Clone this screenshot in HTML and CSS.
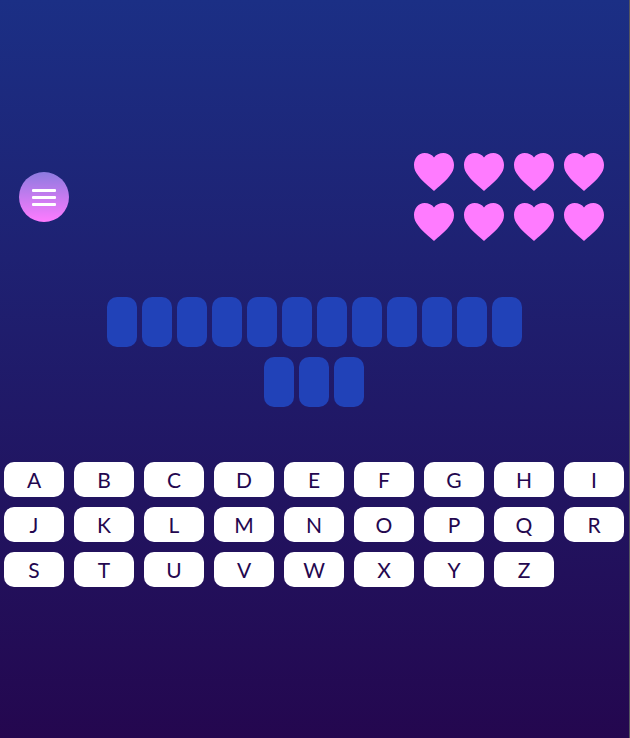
FILE: index.html
```html
<!DOCTYPE html>
<html>
	<head>
		<meta charset="utf-8" />
		<title>Hangman</title>
		<link rel="stylesheet" href="styles.css">
	</head>
	<body>
		<div class="topBar">
			<button class="menuBtn" type="button">
				<span></span>
				<span></span>
				<span></span>
			</button>
			<div class="lives">
				<svg class="heart" viewBox="0 0 40 38"><path d="M20 38C16 34 8 28.500 4.500 23C1.500 19.500 0 16 0 12C0 5.500 4.500 0 10.500 0C14.500 0 18 1.500 20 4.500C22 1.500 25.500 0 29.500 0C35.500 0 40 5.500 40 12C40 16 38.500 19.500 35.500 23C32 28.500 24 34 20 38Z"/></svg>
				<svg class="heart" viewBox="0 0 40 38"><path d="M20 38C16 34 8 28.500 4.500 23C1.500 19.500 0 16 0 12C0 5.500 4.500 0 10.500 0C14.500 0 18 1.500 20 4.500C22 1.500 25.500 0 29.500 0C35.500 0 40 5.500 40 12C40 16 38.500 19.500 35.500 23C32 28.500 24 34 20 38Z"/></svg>
				<svg class="heart" viewBox="0 0 40 38"><path d="M20 38C16 34 8 28.500 4.500 23C1.500 19.500 0 16 0 12C0 5.500 4.500 0 10.500 0C14.500 0 18 1.500 20 4.500C22 1.500 25.500 0 29.500 0C35.500 0 40 5.500 40 12C40 16 38.500 19.500 35.500 23C32 28.500 24 34 20 38Z"/></svg>
				<svg class="heart" viewBox="0 0 40 38"><path d="M20 38C16 34 8 28.500 4.500 23C1.500 19.500 0 16 0 12C0 5.500 4.500 0 10.500 0C14.500 0 18 1.500 20 4.500C22 1.500 25.500 0 29.500 0C35.500 0 40 5.500 40 12C40 16 38.500 19.500 35.500 23C32 28.500 24 34 20 38Z"/></svg>
				<svg class="heart" viewBox="0 0 40 38"><path d="M20 38C16 34 8 28.500 4.500 23C1.500 19.500 0 16 0 12C0 5.500 4.500 0 10.500 0C14.500 0 18 1.500 20 4.500C22 1.500 25.500 0 29.500 0C35.500 0 40 5.500 40 12C40 16 38.500 19.500 35.500 23C32 28.500 24 34 20 38Z"/></svg>
				<svg class="heart" viewBox="0 0 40 38"><path d="M20 38C16 34 8 28.500 4.500 23C1.500 19.500 0 16 0 12C0 5.500 4.500 0 10.500 0C14.500 0 18 1.500 20 4.500C22 1.500 25.500 0 29.500 0C35.500 0 40 5.500 40 12C40 16 38.500 19.500 35.500 23C32 28.500 24 34 20 38Z"/></svg>
				<svg class="heart" viewBox="0 0 40 38"><path d="M20 38C16 34 8 28.500 4.500 23C1.500 19.500 0 16 0 12C0 5.500 4.500 0 10.500 0C14.500 0 18 1.500 20 4.500C22 1.500 25.500 0 29.500 0C35.500 0 40 5.500 40 12C40 16 38.500 19.500 35.500 23C32 28.500 24 34 20 38Z"/></svg>
				<svg class="heart" viewBox="0 0 40 38"><path d="M20 38C16 34 8 28.500 4.500 23C1.500 19.500 0 16 0 12C0 5.500 4.500 0 10.500 0C14.500 0 18 1.500 20 4.500C22 1.500 25.500 0 29.500 0C35.500 0 40 5.500 40 12C40 16 38.500 19.500 35.500 23C32 28.500 24 34 20 38Z"/></svg>
			</div>
		</div>

		<div class="word">
			<div class="slot"></div><div class="slot"></div><div class="slot"></div><div class="slot"></div>
			<div class="slot"></div><div class="slot"></div><div class="slot"></div><div class="slot"></div>
			<div class="slot"></div><div class="slot"></div><div class="slot"></div><div class="slot"></div>
			<div class="slot"></div><div class="slot"></div><div class="slot"></div>
		</div>

		<div class="keyboard">
			<button class="key" type="button">A</button>
			<button class="key" type="button">B</button>
			<button class="key" type="button">C</button>
			<button class="key" type="button">D</button>
			<button class="key" type="button">E</button>
			<button class="key" type="button">F</button>
			<button class="key" type="button">G</button>
			<button class="key" type="button">H</button>
			<button class="key" type="button">I</button>
			<button class="key" type="button">J</button>
			<button class="key" type="button">K</button>
			<button class="key" type="button">L</button>
			<button class="key" type="button">M</button>
			<button class="key" type="button">N</button>
			<button class="key" type="button">O</button>
			<button class="key" type="button">P</button>
			<button class="key" type="button">Q</button>
			<button class="key" type="button">R</button>
			<button class="key" type="button">S</button>
			<button class="key" type="button">T</button>
			<button class="key" type="button">U</button>
			<button class="key" type="button">V</button>
			<button class="key" type="button">W</button>
			<button class="key" type="button">X</button>
			<button class="key" type="button">Y</button>
			<button class="key" type="button">Z</button>
		</div>
	</body>
</html>
```
FILE: styles.css
```css
html {
	height: 100%;
}

body {
	margin: 0;
	height: 738px;
	overflow: hidden;
	border-right: 1px solid #55555f;
	font-family: "Lato", sans-serif;
	background: linear-gradient(to bottom, #1b2f85, #24074f);
}

.topBar {
	display: flex;
	justify-content: space-between;
	align-items: center;
	padding: 153px 25px 0 19px;
}

.menuBtn {
	display: flex;
	flex-direction: column;
	justify-content: center;
	align-items: center;
	gap: 4px;
	width: 50px;
	height: 50px;
	padding: 0;
	border: none;
	border-radius: 50%;
	background: linear-gradient(to bottom, #8d7be0, #ff7bff);
}

.menuBtn span {
	display: block;
	width: 24px;
	height: 3px;
	border-radius: 1px;
	background-color: #fff;
}

.lives {
	display: grid;
	grid-template-columns: repeat(4, 40px);
	gap: 12px 10px;
}

.heart {
	display: block;
	width: 40px;
	height: 38px;
	fill: #ff7bff;
}

.word {
	display: flex;
	flex-wrap: wrap;
	justify-content: center;
	gap: 10px 5px;
	width: 420px;
	margin: 56px auto 0 104px;
}

.slot {
	width: 30px;
	height: 50px;
	border-radius: 10px;
	background-color: #2142b8;
}

.keyboard {
	display: flex;
	flex-wrap: wrap;
	gap: 10px;
	padding: 55px 0 0 4px;
}

.key {
	width: 60px;
	height: 35px;
	padding: 0;
	border: none;
	border-radius: 10px;
	background-color: #fff;
	color: #24074f;
	font-family: "Lato", sans-serif;
	font-size: 21px;
	font-weight: 400;
}
```
